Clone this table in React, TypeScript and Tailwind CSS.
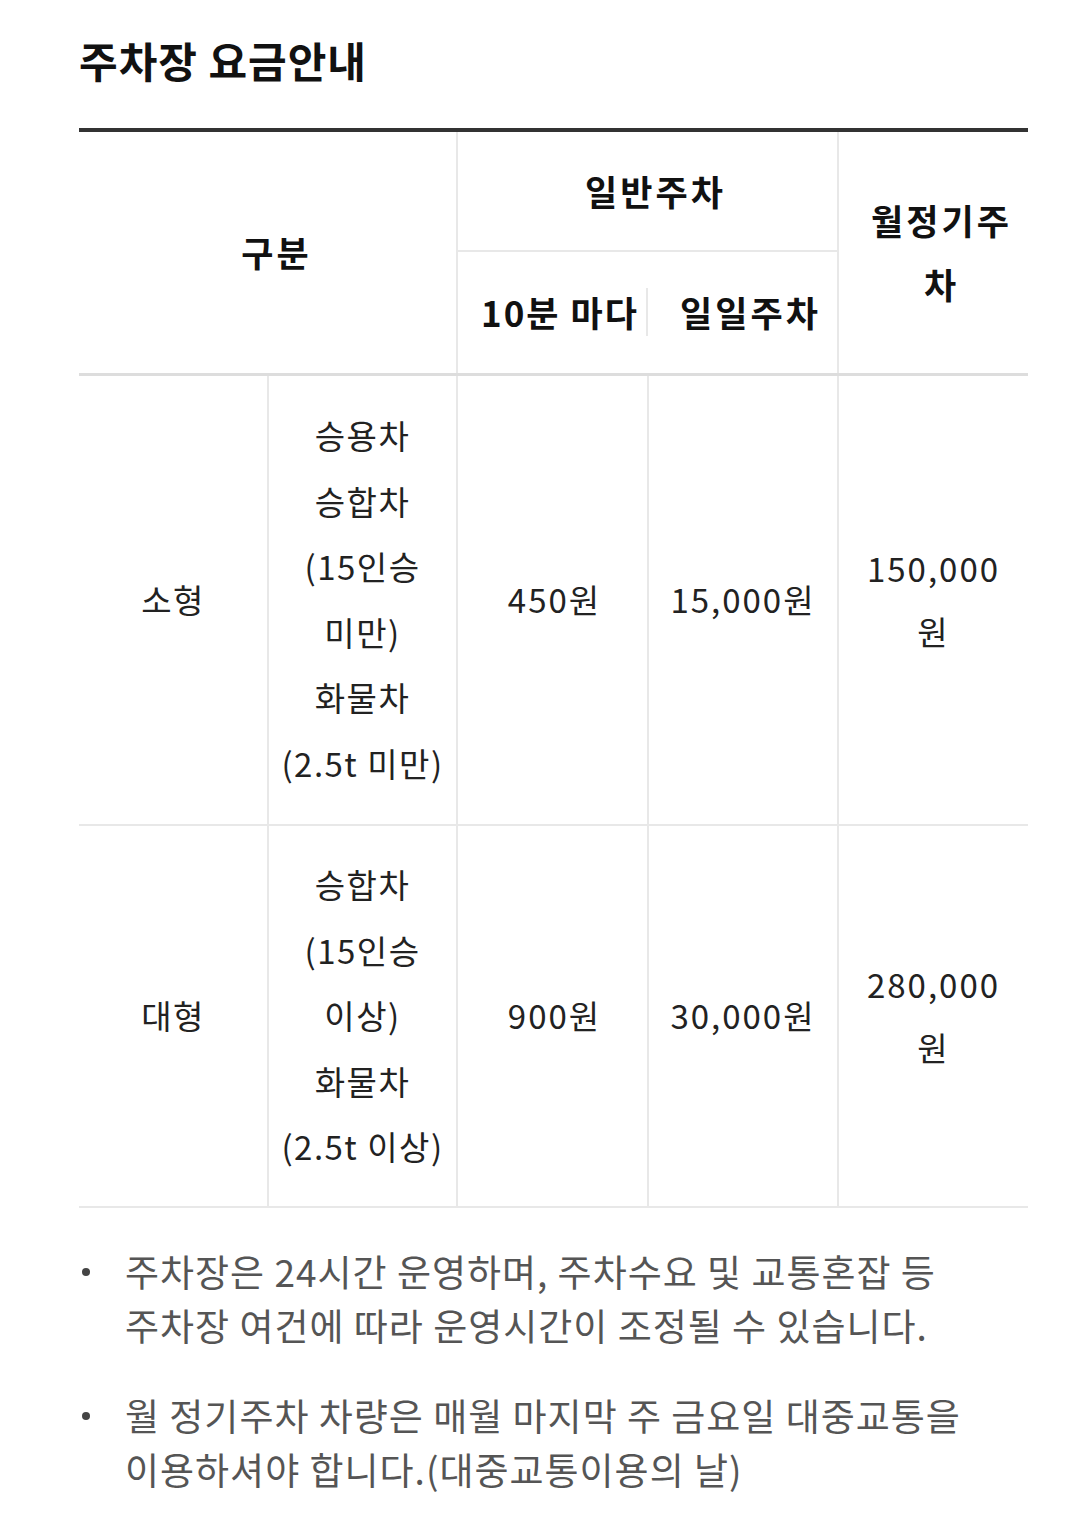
import React from "react";

const font = "font-['Noto_Sans_CJK_KR','Noto_Sans',sans-serif]";

export default function App() {
  return (
    <div className={`${font} bg-white w-[1079px] min-h-[1533px] pl-[79px] pr-[51px] pt-[30px]`}>
      <h1 className="text-[42px] leading-[60px] font-bold text-[#111] tracking-[1px]">주차장 요금안내</h1>
      <table className="mt-[38px] w-[949px] table-fixed border-collapse border-t-4 border-[#333]">
        <colgroup>
          <col className="w-[189px]" />
          <col className="w-[189px]" />
          <col className="w-[191px]" />
          <col className="w-[190px]" />
          <col className="w-[190px]" />
        </colgroup>
        <thead className="text-[35px] font-bold text-[#111] tracking-[3px]">
          <tr className="h-[121px]">
            <th rowSpan={2} colSpan={2} className="pl-[18px] border-b-[3px] border-[#dddddd] leading-[64px]">
              구분
            </th>
            <th colSpan={2} className="pl-[16px] border-l-2 border-b-2 border-[#e8e8e8] leading-[64px]">
              일반주차
            </th>
            <th rowSpan={2} className="pl-[16px] border-l-2 border-b-[3px] border-[#e8e8e8] border-b-[#dddddd] leading-[64px]">
              월정기주
              <br />차
            </th>
          </tr>
          <tr className="h-[123px]">
            <th className="p-0 border-l-2 border-b-[3px] border-[#e8e8e8] border-b-[#dddddd]">
              <div className="h-[48px] flex items-center justify-center pl-[16px] border-r-2 border-[#e8e8e8] tracking-[2px]">10분 마다</div>
            </th>
            <th className="p-0 border-b-[3px] border-[#dddddd]">
              <div className="h-[48px] flex items-center justify-center pl-[16px]">일일주차</div>
            </th>
          </tr>
        </thead>
        <tbody className="text-[33px] text-[#222] text-center tracking-[1.5px]">
          <tr className="h-[451px]">
            <td className="border-b-2 border-[#e8e8e8]">소형</td>
            <td className="border-l-2 border-b-2 border-[#e8e8e8] leading-[65.6px]">
              승용차
              <br />승합차
              <br />(15인승
              <br />미만)
              <br />화물차
              <br />(2.5t 미만)
            </td>
            <td className="pl-[4px] border-l-2 border-b-2 border-[#e8e8e8] tracking-[2px]">450원</td>
            <td className="border-l-2 border-b-2 border-[#e8e8e8] tracking-[2px]">15,000원</td>
            <td className="border-l-2 border-b-2 border-[#e8e8e8] leading-[63px] tracking-[2px]">
              150,000
              <br />원
            </td>
          </tr>
          <tr className="h-[382px]">
            <td className="border-b-2 border-[#e8e8e8]">대형</td>
            <td className="border-l-2 border-b-2 border-[#e8e8e8] leading-[65.6px]">
              승합차
              <br />(15인승
              <br />이상)
              <br />화물차
              <br />(2.5t 이상)
            </td>
            <td className="pl-[4px] border-l-2 border-b-2 border-[#e8e8e8] tracking-[2px]">900원</td>
            <td className="border-l-2 border-b-2 border-[#e8e8e8] tracking-[2px]">30,000원</td>
            <td className="border-l-2 border-b-2 border-[#e8e8e8] leading-[63px] tracking-[2px]">
              280,000
              <br />원
            </td>
          </tr>
        </tbody>
      </table>
      <ul className="mt-[36px] flex flex-col gap-[36px] text-[37px] leading-[54px] text-[#555] tracking-[1px]">
        <li className="flex">
          <span className="w-[46px] shrink-0 flex items-start pt-[24px] pl-[3px]">
            <span className="block w-[8px] h-[8px] rounded-full bg-[#444]" />
          </span>
          <span>
            주차장은 24시간 운영하며, 주차수요 및 교통혼잡 등
            <br />주차장 여건에 따라 운영시간이 조정될 수 있습니다.
          </span>
        </li>
        <li className="flex">
          <span className="w-[46px] shrink-0 flex items-start pt-[24px] pl-[3px]">
            <span className="block w-[8px] h-[8px] rounded-full bg-[#444]" />
          </span>
          <span>
            월 정기주차 차량은 매월 마지막 주 금요일 대중교통을
            <br />이용하셔야 합니다.(대중교통이용의 날)
          </span>
        </li>
      </ul>
    </div>
  );
}
